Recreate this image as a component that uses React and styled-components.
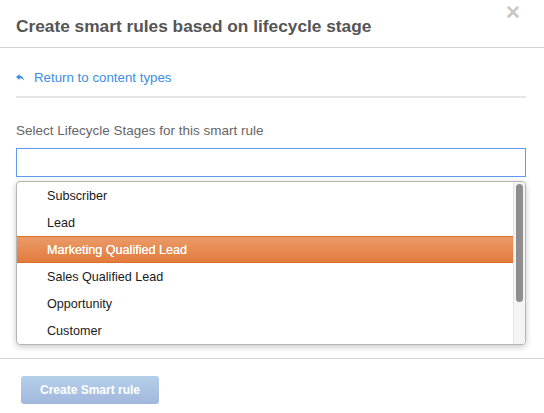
import React from "react";
import styled, { createGlobalStyle } from "styled-components";

const Global = createGlobalStyle`
  html, body { margin: 0; padding: 0; background: #fff; }
  body { font-family: "Liberation Sans", Arial, Helvetica, sans-serif; -webkit-font-smoothing: antialiased; }
`;

const Modal = styled.div`
  position: relative;
  width: 544px;
  height: 413px;
  background: #fff;
  overflow: hidden;
`;

const Header = styled.div`
  height: 48px;
  box-sizing: border-box;
  border-bottom: 1px solid #d3d3d3;
  padding: 5px 16px 0;
  display: flex;
  align-items: center;
`;

const Title = styled.h1`
  margin: 0;
  font-size: 17.3px;
  font-weight: bold;
  color: #555;
`;

const Close = styled.span`
  position: absolute;
  top: 3px;
  right: 23px;
  font-size: 19px;
  font-weight: bold;
  color: #c8c8c8;
  line-height: 20px;
`;

const Body = styled.div`
  padding: 0 18px 0 16px;
`;

const BackRow = styled.div`
  display: flex;
  align-items: center;
  gap: 10px;
  height: 50px;
  box-sizing: border-box;
  border-bottom: 2px solid #e6e6e6;
  padding-top: 10px;
`;

const BackLink = styled.a`
  color: #3c8ee3;
  font-size: 13.3px;
  text-decoration: none;
`;

const Label = styled.div`
  margin-top: 25px;
  color: #666;
  font-size: 13.5px;
  line-height: 16px;
`;

const Input = styled.div`
  margin-top: 9px;
  height: 27px;
  border: 1px solid #5d9bef;
  background: #fff;
`;

const Dropdown = styled.div`
  margin-top: 4px;
  height: 162px;
  border: 1px solid #b5b5b5;
  border-radius: 4px;
  box-shadow: 0 2px 6px rgba(0, 0, 0, 0.22);
  display: flex;
  overflow: hidden;
  background: #fff;
`;

const List = styled.div`
  flex: 1;
`;

const Item = styled.div`
  height: 27px;
  box-sizing: border-box;
  display: flex;
  align-items: center;
  padding-left: 30px;
  font-size: 12.6px;
  color: ${(p) => (p.$active ? "#fff" : "#1a1a1a")};
  background: ${(p) =>
    p.$active ? "linear-gradient(#eb9b68, #e27b3e)" : "transparent"};
  border-top: 1px solid ${(p) => (p.$active ? "#e06f26" : "transparent")};
  border-bottom: 1px solid ${(p) => (p.$active ? "#e06f26" : "transparent")};
  text-shadow: ${(p) => (p.$active ? "0 0 0.4px #fff" : "none")};
`;

const Track = styled.div`
  width: 12px;
  background: #f4f4f4;
  border-left: 1px solid #e4e4e4;
  padding: 2px 0 0 2px;
  box-sizing: border-box;
`;

const Thumb = styled.div`
  width: 7px;
  height: 118px;
  background: #8e8e8e;
  border-radius: 4px;
`;

const Footer = styled.div`
  position: absolute;
  left: 0;
  right: 0;
  top: 358px;
  border-top: 1px solid #d6d6d6;
  padding: 17px 21px;
`;

const Button = styled.button`
  width: 138px;
  height: 28px;
  border: none;
  border-radius: 3px;
  background: linear-gradient(#b4d0e8, #a2b7de);
  color: #fff;
  font-family: "Liberation Sans", Arial, sans-serif;
  font-weight: bold;
  font-size: 12px;
  padding: 0;
`;

const stages = [
  "Subscriber",
  "Lead",
  "Marketing Qualified Lead",
  "Sales Qualified Lead",
  "Opportunity",
  "Customer",
];

export default function App() {
  return (
    <>
      <Global />
      <Modal>
        <Header>
          <Title>Create smart rules based on lifecycle stage</Title>
        </Header>
        <Close>✕</Close>
        <Body>
          <BackRow>
            <svg width="8" height="7" viewBox="0 0 8 7">
              <path d="M0 3 L3.5 0 L3.5 1.8 C6 1.8 7.5 3.5 8 6.5 C6.8 4.8 5.5 4.3 3.5 4.3 L3.5 6 Z" fill="#3c8ee3" />
            </svg>
            <BackLink href="#">Return to content types</BackLink>
          </BackRow>
          <Label>Select Lifecycle Stages for this smart rule</Label>
          <Input />
          <Dropdown>
            <List>
              {stages.map((s) => (
                <Item key={s} $active={s === "Marketing Qualified Lead"}>
                  {s}
                </Item>
              ))}
            </List>
            <Track>
              <Thumb />
            </Track>
          </Dropdown>
        </Body>
        <Footer>
          <Button>Create Smart rule</Button>
        </Footer>
      </Modal>
    </>
  );
}
